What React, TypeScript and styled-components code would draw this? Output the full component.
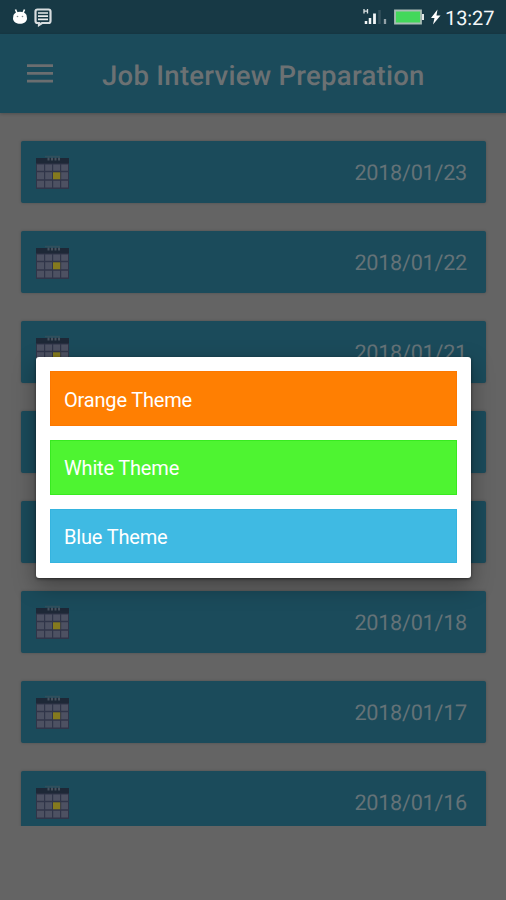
import React from "react";
import styled, { createGlobalStyle } from "styled-components";

const GlobalStyle = createGlobalStyle`
  * { box-sizing: border-box; }
  html, body { margin: 0; padding: 0; background: #646464; }
  body {
    font-family: Roboto, "Liberation Sans", sans-serif;
    text-rendering: geometricPrecision;
    overflow: hidden;
  }
`;

const Screen = styled.div`
  position: relative;
  display: flex;
  flex-direction: column;
  width: 506px;
  height: 900px;
  overflow: hidden;
  background: #646464;
`;

const StatusBar = styled.div`
  display: flex;
  align-items: center;
  justify-content: space-between;
  flex: none;
  height: 34px;
  padding: 0 11px 0 12px;
  background: #173945;
`;

const StatusGroup = styled.div`
  display: flex;
  align-items: center;
`;

const Clock = styled.span`
  width: 50px;
  margin-left: 4px;
  color: #f4f7f8;
  font-size: 20px;
  line-height: 34px;
  padding-top: 2px;
  letter-spacing: -0.1px;
  white-space: nowrap;
`;

const AppBar = styled.header`
  display: flex;
  align-items: center;
  flex: none;
  height: 79px;
  padding-left: 27px;
  background: #1b4b5b;
  box-shadow: 0 1px 3px rgba(0, 0, 0, 0.22);
`;

const MenuButton = styled.button`
  display: flex;
  width: 26px;
  height: 20px;
  padding: 0;
  border: 0;
  background: none;
`;

const Title = styled.h1`
  margin: 4px 0 0 49px;
  color: #6c7173;
  font-size: 27.5px;
  font-weight: 500;
  line-height: 36px;
  letter-spacing: 0.27px;
  white-space: nowrap;
`;

const DateList = styled.main`
  display: flex;
  flex-direction: column;
  gap: 28px;
  flex: none;
  height: 713px;
  padding: 28px 20px 0 21px;
  overflow: hidden;
`;

const DateCard = styled.article`
  display: flex;
  align-items: center;
  justify-content: space-between;
  flex: none;
  height: 62px;
  padding: 0 19px 0 14px;
  border-radius: 2px;
  background: #1b4b5b;
  box-shadow: 0 0 3px rgba(0, 0, 0, 0.22);
`;

const DateText = styled.time`
  padding-top: 3px;
  color: #647277;
  font-size: 21.7px;
  line-height: 30px;
  letter-spacing: -0.28px;
`;

const ThemeDialog = styled.section`
  position: absolute;
  top: 357px;
  left: 36px;
  display: flex;
  flex-direction: column;
  gap: 14px;
  width: 435px;
  height: 221px;
  padding: 14.4px 14.5px 14.6px 14px;
  border-radius: 3px;
  background: #fff;
  box-shadow: 0 8px 22px rgba(0, 0, 0, 0.35), 0 1px 3px rgba(0, 0, 0, 0.5);
`;

const ThemeOption = styled.button<{ $fill: string; $edge: string }>`
  flex: 1;
  padding: 2px 14px 0;
  border: 0;
  background: ${(p) => p.$fill};
  box-shadow: inset 0 0 0 1px ${(p) => p.$edge};
  color: #fff;
  font-family: inherit;
  font-size: 20px;
  line-height: 28px;
  letter-spacing: -0.18px;
  text-align: left;
`;

const Icon = styled.svg<{ $left?: number }>`
  display: block;
  flex: none;
  margin-left: ${(p) => p.$left ?? 0}px;
`;

const AndroidIcon = () => (
  <Icon width="16" height="18" viewBox="0 0 16 18">
    <path d="M3.500 1.500 5 5M12.500 1.500 11 5" stroke="#fff" strokeWidth="1.600" />
    <path d="M1.500 7C3 2.500 13 2.500 14.500 7L15 10.500c-.3 7-13.700 7-14 0Z" fill="#fff" />
    <circle cx="5.500" cy="8.500" r=".8" fill="#7d898e" />
    <circle cx="10.500" cy="8.500" r=".8" fill="#7d898e" />
  </Icon>
);

const MessageIcon = () => (
  <Icon $left={6} width="18" height="20" viewBox="0 0 18 20">
    <path
      d="M3.500 2.500h11q2 0 2 2v9.500q0 2-2 2H8l-3 2V16H3.500q-2 0-2-2V4.500q0-2 2-2Z"
      fill="#173945"
      stroke="#d8dddf"
      strokeWidth="2.200"
    />
    <path d="M4 6h10M4 9.200h10M4 12.400h10" stroke="#e8ebec" strokeWidth="1.700" />
  </Icon>
);

const SignalIcon = () => (
  <Icon width="25" height="18" viewBox="0 0 25 18">
    <path d="M1 1v4.500M4.500 1v4.500M1 3.200h3.500" stroke="#dce2e4" strokeWidth="1.300" />
    <path d="M3 13v3M7 10v6" stroke="#f2f5f6" strokeWidth="2.500" />
    <path d="M11.500 5.500V16" stroke="#f2f5f6" strokeWidth="2.800" />
    <path d="M16.500 2V16" stroke="#36525d" strokeWidth="2.500" />
    <path d="M22 11v5" stroke="#93a2a8" strokeWidth="2.300" />
  </Icon>
);

const BatteryIcon = () => (
  <Icon $left={6} width="31" height="16" viewBox="0 0 31 16">
    <path d="M1 1.500h26v13H1Z" fill="#43d85b" stroke="#a9bcb5" strokeWidth="1.800" />
    <path d="M28 5h2v6h-2Z" fill="#e1e7e8" />
  </Icon>
);

const ChargingIcon = () => (
  <Icon $left={5} width="11" height="16" viewBox="0 0 11 16">
    <path d="M7.500.5 1 9h3.500L3 15.500 10.500 6.500H6.500Z" fill="#fff" />
  </Icon>
);

const MenuIcon = () => (
  <Icon width="26" height="20" viewBox="0 0 26 20">
    <path d="M0 1.700h26M0 9.300h26M0 17.200h26" stroke="#6b6e70" strokeWidth="2.800" />
  </Icon>
);

const CalendarIcon = () => (
  <Icon width="35" height="36" viewBox="0 0 35 36">
    <path d="M1 4h33v31H1Z" fill="#303549" />
    <path d="M1 4h33v5.500H1Z" fill="#1e2837" />
    <path
      d="M2 10.500h7v6.300H2ZM10.200 10.500h6.800v6.300h-6.800ZM18.200 10.500H25v6.300h-6.800ZM26.200 10.500H33v6.300h-6.800ZM2 18.300h7v7H2ZM10.200 18.300h6.800v7h-6.800ZM26.200 18.300H33v7h-6.800ZM2 26.800h7v6.700H2ZM10.200 26.800h6.800v6.700h-6.800ZM18.200 26.800H25v6.700h-6.800ZM26.200 26.800H33v6.700h-6.800Z"
      fill="#4d5162"
    />
    <path d="M18 18.300h7.200v7H18Z" fill="#857a1d" />
    <path d="M10 2.500h15" stroke="#304f5c" strokeWidth="1.500" />
    <path d="M12.500 5h2M16 5h2M19.500 5h2M23 5h2" stroke="#46525e" strokeWidth="2.800" />
  </Icon>
);

const dates = [
  "2018/01/23",
  "2018/01/22",
  "2018/01/21",
  "2018/01/20",
  "2018/01/19",
  "2018/01/18",
  "2018/01/17",
  "2018/01/16",
];

const themes = [
  { label: "Orange Theme", fill: "#ff7f02", edge: "#fc7800" },
  { label: "White Theme", fill: "#4ef431", edge: "#38ea20" },
  { label: "Blue Theme", fill: "#3fbae3", edge: "#35b4df" },
];

export default function App() {
  return (
    <>
      <GlobalStyle />
      <Screen>
        <StatusBar>
          <StatusGroup>
            <AndroidIcon />
            <MessageIcon />
          </StatusGroup>
          <StatusGroup>
            <SignalIcon />
            <BatteryIcon />
            <ChargingIcon />
            <Clock>13:27</Clock>
          </StatusGroup>
        </StatusBar>
        <AppBar>
          <MenuButton aria-label="Menu">
            <MenuIcon />
          </MenuButton>
          <Title>Job Interview Preparation</Title>
        </AppBar>
        <DateList>
          {dates.map((date) => (
            <DateCard key={date}>
              <CalendarIcon />
              <DateText>{date}</DateText>
            </DateCard>
          ))}
        </DateList>
        <ThemeDialog role="dialog" aria-label="Theme">
          {themes.map((theme) => (
            <ThemeOption key={theme.label} $fill={theme.fill} $edge={theme.edge}>
              {theme.label}
            </ThemeOption>
          ))}
        </ThemeDialog>
      </Screen>
    </>
  );
}
